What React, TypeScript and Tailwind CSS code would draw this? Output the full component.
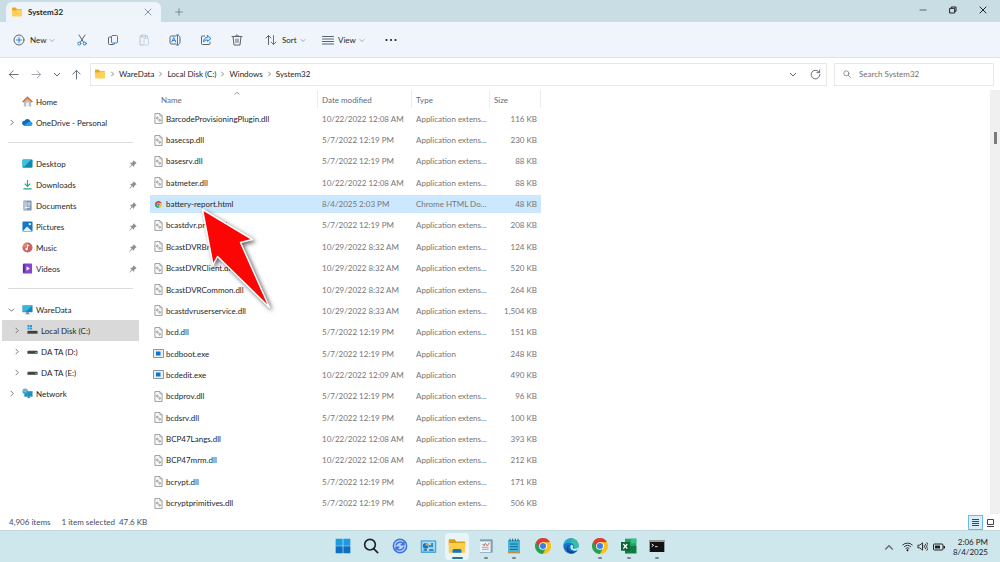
import type { ReactNode } from "react";

type FileKind = "dll" | "exe" | "html";
type FileRow = [name: string, date: string, size: string, kind: FileKind];

const FILES: FileRow[] = [
  ["BarcodeProvisioningPlugin.dll", "10/22/2022 12:08 AM", "116 KB", "dll"],
  ["basecsp.dll", "5/7/2022 12:19 PM", "230 KB", "dll"],
  ["basesrv.dll", "5/7/2022 12:19 PM", "88 KB", "dll"],
  ["batmeter.dll", "10/22/2022 12:08 AM", "88 KB", "dll"],
  ["battery-report.html", "8/4/2025 2:03 PM", "48 KB", "html"],
  ["bcastdvr.proxy.dll", "5/7/2022 12:19 PM", "208 KB", "dll"],
  ["BcastDVRBroker.dll", "10/29/2022 8:32 AM", "124 KB", "dll"],
  ["BcastDVRClient.dll", "10/29/2022 8:32 AM", "520 KB", "dll"],
  ["BcastDVRCommon.dll", "10/29/2022 8:32 AM", "264 KB", "dll"],
  ["bcastdvruserservice.dll", "10/29/2022 8:33 AM", "1,504 KB", "dll"],
  ["bcd.dll", "5/7/2022 12:19 PM", "151 KB", "dll"],
  ["bcdboot.exe", "5/7/2022 12:19 PM", "248 KB", "exe"],
  ["bcdedit.exe", "10/22/2022 12:09 AM", "490 KB", "exe"],
  ["bcdprov.dll", "5/7/2022 12:19 PM", "96 KB", "dll"],
  ["bcdsrv.dll", "5/7/2022 12:19 PM", "100 KB", "dll"],
  ["BCP47Langs.dll", "10/22/2022 12:08 AM", "393 KB", "dll"],
  ["BCP47mrm.dll", "10/22/2022 12:08 AM", "212 KB", "dll"],
  ["bcrypt.dll", "5/7/2022 12:19 PM", "171 KB", "dll"],
  ["bcryptprimitives.dll", "5/7/2022 12:19 PM", "506 KB", "dll"],
];

const TYPES: Record<FileKind, string> = {
  dll: "Application extens...",
  exe: "Application",
  html: "Chrome HTML Do...",
};

function Chevron({ dir, className = "size-2" }: { dir: "right" | "down" | "up"; className?: string }) {
  const d = { right: "M3 1l3 3-3 3", down: "M1 3l3 3 3-3", up: "M1 6l3-3 3 3" }[dir];
  return (
    <svg
      viewBox="0 0 8 8"
      className={`shrink-0 text-[#666] ${className}`}
      fill="none"
      stroke="currentColor"
      aria-hidden
    >
      <path d={d} />
    </svg>
  );
}

function Line({ children, className = "size-3" }: { children: ReactNode; className?: string }) {
  return (
    <svg
      viewBox="0 0 24 24"
      className={`shrink-0 ${className}`}
      fill="none"
      stroke="#5a6470"
      strokeWidth="2"
      strokeLinecap="round"
      strokeLinejoin="round"
      aria-hidden
    >
      {children}
    </svg>
  );
}

function Folder({ className = "size-3" }: { className?: string }) {
  return (
    <svg viewBox="0 0 24 24" className={`shrink-0 ${className}`} aria-hidden>
      <path d="M2 5a2 2 0 0 1 2-2h5l3 3h8a2 2 0 0 1 2 2v4H2z" fill="#e8a723" />
      <path d="M2 9h8l2-2h10v12a2 2 0 0 1-2 2H4a2 2 0 0 1-2-2z" fill="#ffd05a" />
    </svg>
  );
}

function Chrome({ className }: { className: string }) {
  return (
    <svg viewBox="0 0 24 24" className={className} aria-hidden>
      <path d="M12 12L1.600 6A12 12 0 0 1 22.400 6z" fill="#e23b2e" />
      <path d="M12 12L22.400 6A12 12 0 0 1 12 24z" fill="#fbc116" />
      <path d="M12 12V24A12 12 0 0 1 1.600 6z" fill="#2b9f4b" />
      <path d="M12 6.500h10.700L17 15z" fill="#fbc116" />
      <path d="M1.600 6L7 14.500 12 6.500z" fill="#e23b2e" />
      <path d="M7 14.500L12 24l5-9z" fill="#2b9f4b" />
      <path d="M17 14.500L12 24l5-3z" fill="#fbc116" />
      <circle cx="12" cy="12" r="5.800" fill="#fff" />
      <circle cx="12" cy="12" r="4.600" fill="#3a7fea" />
    </svg>
  );
}

function FileIcon({ kind }: { kind: FileKind }) {
  if (kind === "html") return <Chrome className="size-[7px]" />;
  if (kind === "exe")
    return (
      <svg viewBox="0 0 22 18" className="h-[9px] w-[11px]" aria-hidden>
        <path d="M1 1h20v16H1z" fill="#e8f0f5" stroke="#8a969e" strokeWidth="2" />
        <path d="M6 5h9v8H6z" fill="#0878cf" />
      </svg>
    );
  return (
    <svg viewBox="0 0 20 24" className="h-[11px] w-[9px]" fill="none" stroke="#8b8b8b" aria-hidden>
      <path d="M2 1h11l5 5v17H2z" fill="#fafafa" strokeWidth="1.800" />
      <path d="M13 1v5h5" strokeWidth="1.500" />
      <circle cx="7.500" cy="11" r="2" strokeWidth="2" />
      <circle cx="12.500" cy="16" r="2" strokeWidth="2" />
    </svg>
  );
}

const Monitor = (
  <svg viewBox="0 0 24 24" className="size-[11px]" aria-hidden>
    <path d="M1 3h22v15H1z" fill="#1688be" />
    <path d="M2 4h20L8 17H2z" fill="#35b5e0" />
    <path d="M9 18h6v3H9zM6 21h12v1.500H6z" fill="#6b8796" />
  </svg>
);

const Drive = (
  <svg viewBox="0 0 24 24" className="size-[11px]" aria-hidden>
    <path d="M3 9h18l2 3H1z" fill="#b5b5b5" />
    <path d="M1 11h22v6H1z" fill="#404040" />
    <path d="M18 13h3v2h-3z" fill="#7fd39a" />
  </svg>
);

type Place = { label: string; icon: ReactNode; arrow?: "right" | "down"; nested?: boolean; active?: boolean };

const TOP: Place[] = [
  {
    label: "Home",
    icon: (
      <svg viewBox="0 0 24 24" className="size-[11px]" aria-hidden>
        <path d="M4 11l8-8 8 8v12h-5v-8H9v8H4z" fill="#b9bdc4" />
        <path d="M9 14h6v9H9z" fill="#f3ede8" />
        <path d="M1.500 13L12 3l10.500 10" fill="none" stroke="#d9702e" strokeWidth="3.500" strokeLinejoin="round" />
      </svg>
    ),
  },
  {
    label: "OneDrive - Personal",
    arrow: "right",
    icon: (
      <svg viewBox="0 0 24 24" className="size-[11px]" aria-hidden>
        <path d="M6 19a5.500 5.500 0 0 1-.500-11 7 7 0 0 1 13 2.500A4.500 4.500 0 0 1 19 19z" fill="#0f6cbd" />
        <path d="M4 18.500L15 11a5 5 0 0 1 8 3.500 4.500 4.500 0 0 1-4 4.500H6z" fill="#28a0ea" />
      </svg>
    ),
  },
];

const PINNED: Place[] = [
  {
    label: "Desktop",
    icon: (
      <svg viewBox="0 0 24 24" className="size-[11px]" aria-hidden>
        <rect x="1" y="3" width="22" height="18" rx="2" fill="#1188b2" />
        <path d="M3 3h17L5 19H1V5z" fill="#3cc2dc" />
      </svg>
    ),
  },
  {
    label: "Downloads",
    icon: (
      <svg viewBox="0 0 24 24" className="size-[11px]" fill="none" stroke="#27a67c" strokeWidth="2.500" aria-hidden>
        <path d="M12 2v14M6 10l6 6 6-6M3 21.500h18" />
      </svg>
    ),
  },
  {
    label: "Documents",
    icon: (
      <svg viewBox="0 0 24 24" className="size-[11px]" aria-hidden>
        <rect x="3" y="1" width="18" height="22" rx="2" fill="#8198b2" />
        <path d="M3 3h8v18H3z" fill="#b5c6d7" />
        <path d="M12 7h6M12 11h6M7 16h10" stroke="#fff" strokeWidth="2" />
      </svg>
    ),
  },
  {
    label: "Pictures",
    icon: (
      <svg viewBox="0 0 24 24" className="size-[11px]" aria-hidden>
        <rect x="1" y="1" width="22" height="22" rx="2" fill="#1478c8" />
        <path d="M2 22l9-10 10 10z" fill="#e6f6ff" />
        <circle cx="17" cy="7" r="2.500" fill="#fff" />
      </svg>
    ),
  },
  {
    label: "Music",
    icon: (
      <svg viewBox="0 0 24 24" className="size-[11px]" aria-hidden>
        <circle cx="12" cy="12" r="11" fill="#ca6068" />
        <path d="M1 12A11 11 0 0 1 12 1l-2 11z" fill="#e08a63" />
        <path d="M12 15V6l4 2" fill="none" stroke="#fff" strokeWidth="2" />
        <circle cx="10" cy="15.500" r="2.800" fill="#fff" />
      </svg>
    ),
  },
  {
    label: "Videos",
    icon: (
      <svg viewBox="0 0 24 24" className="size-[11px]" aria-hidden>
        <rect x="2" y="1" width="20" height="22" rx="2" fill="#8a45cc" />
        <path d="M2 3h4v18H2z" fill="#5c2a9c" />
        <path d="M10 7l7 5-7 5z" fill="#fff" />
      </svg>
    ),
  },
];

const DEVICES: Place[] = [
  { label: "WareData", icon: Monitor, arrow: "down" },
  {
    label: "Local Disk (C:)",
    arrow: "right",
    nested: true,
    active: true,
    icon: (
      <svg viewBox="0 0 24 24" className="size-[11px]" aria-hidden>
        <path d="M1 0h4v5H1zM6 0h5v5H6zM1 6h4v4H1zM6 6h5v4H6z" fill="#2c9ad6" />
        <path d="M3 12h18l2 2H1z" fill="#a8a8a8" />
        <path d="M1 13h22v6H1z" fill="#404040" />
      </svg>
    ),
  },
  { label: "DA TA (D:)", icon: Drive, arrow: "right", nested: true },
  { label: "DA TA (E:)", icon: Drive, arrow: "right", nested: true },
  {
    label: "Network",
    arrow: "right",
    icon: (
      <svg viewBox="0 0 24 24" className="size-[11px]" aria-hidden>
        <path d="M5 7h18v12H5z" fill="#1b93c4" />
        <path d="M12 19h5v3h-5z" fill="#55707e" />
        <circle cx="7" cy="7" r="6" fill="#3f9fc6" />
        <path d="M2 6c3-1 4 3 7 2M6 1c-1 3 4 4 6 4" stroke="#d6f2fb" strokeWidth="1.500" fill="none" />
      </svg>
    ),
  },
];

function Places({ items, pinned = false }: { items: Place[]; pinned?: boolean }) {
  return (
    <ul>
      {items.map((p) => (
        <li key={p.label}>
          <a
            href="#"
            className={`flex h-[21px] items-center pr-[2px] ${p.nested ? "pl-[11px]" : "pl-[6px]"} ${
              p.active ? "bg-[#d9d9d9]" : ""
            }`}
          >
            <span className="w-[14px]">
              {p.arrow && (
                <Chevron dir={p.arrow} className={p.arrow === "down" ? "size-[7px] text-[#222]" : "size-[7px]"} />
              )}
            </span>
            {p.icon}
            <span className="ml-[3px] flex-1">{p.label}</span>
            {pinned && (
              <svg viewBox="0 0 24 24" className="size-2" fill="#8a9197" aria-hidden>
                <path d="M14 1l9 9-3 1-4 4-1 6-5-5-8 7-1-1 7-8-5-5 6-1 4-4z" />
              </svg>
            )}
          </a>
        </li>
      ))}
    </ul>
  );
}

const COMMANDS: { label: string; icon: ReactNode; disabled?: boolean }[] = [
  {
    label: "Cut",
    icon: (
      <Line>
        <path d="M6 2l9 14M18 2L9 16" />
        <circle cx="6.500" cy="19" r="3" stroke="#2a84d8" />
        <circle cx="17.500" cy="19" r="3" stroke="#2a84d8" />
      </Line>
    ),
  },
  {
    label: "Copy",
    icon: (
      <Line>
        <path d="M8 6H5a2 2 0 0 0-2 2v11a2 2 0 0 0 2 2h8a2 2 0 0 0 2-2" />
        <rect x="9" y="3" width="12" height="15" rx="2" stroke="#2a84d8" />
      </Line>
    ),
  },
  {
    label: "Paste",
    disabled: true,
    icon: (
      <Line>
        <path d="M8 4H4v18h7M15 4h4v4M8 2h7v4H8z" />
        <rect x="12" y="9" width="9" height="13" rx="1" stroke="#7d9db8" />
      </Line>
    ),
  },
  {
    label: "Rename",
    icon: (
      <Line>
        <path d="M14 4H5a3 3 0 0 0-3 3v10a3 3 0 0 0 3 3h9M20 4a3 3 0 0 1 2 3v10a3 3 0 0 1-2 3" />
        <path d="M17 2v20M15 2h4M15 22h4M5.500 16L9.500 7l4 9M7 13h5" stroke="#2a84d8" />
      </Line>
    ),
  },
  {
    label: "Share",
    icon: (
      <Line>
        <path d="M9 4H5a2 2 0 0 0-2 2v13a2 2 0 0 0 2 2h13a2 2 0 0 0 2-2v-3" />
        <path d="M15 3l7 6-7 6v-3c-4 0-6 1-8 4 0-6 3-9 8-10z" fill="#cfe6fa" stroke="#2a84d8" />
      </Line>
    ),
  },
  {
    label: "Delete",
    icon: (
      <Line>
        <path d="M2 5h20M8 5c0-4 8-4 8 0M4 5l2 17h12l2-17M10 10v7M14 10v7" />
      </Line>
    ),
  },
];

const APPS: { label: string; icon: ReactNode; state?: "open" | "active" }[] = [
  {
    label: "Start",
    icon: (
      <svg viewBox="0 0 24 24" className="size-4" aria-hidden>
        <path d="M1 1h10.500v10.500H1zM12.500 1H23v10.500H12.500z" fill="#1e9be0" />
        <path d="M1 12.500h10.500V23H1zM12.500 12.500H23V23H12.500z" fill="#0b6fc2" />
      </svg>
    ),
  },
  {
    label: "Search",
    icon: (
      <svg viewBox="0 0 24 24" className="size-4" fill="none" stroke="#202428" strokeWidth="2.500" aria-hidden>
        <circle cx="10.500" cy="10" r="8" />
        <path d="M16 16l6 6" strokeLinecap="round" />
      </svg>
    ),
  },
  {
    label: "Sync",
    icon: (
      <svg viewBox="0 0 24 24" className="size-4" fill="none" stroke="#3d73e0" strokeWidth="2.200" aria-hidden>
        <circle cx="12" cy="12" r="10" fill="#bdd3fa" />
        <path d="M6 11c1-5 8-7 11-2M18 5v5h-5M18 13c-1 5-8 7-11 2M6 19v-5h5" />
      </svg>
    ),
  },
  {
    label: "Control Panel",
    icon: (
      <svg viewBox="0 0 24 24" className="size-[17px]" aria-hidden>
        <rect x="1" y="3" width="22" height="18" rx="1" fill="#4aa9de" />
        <path d="M3 5h18v14H3z" fill="#a5dcf6" />
        <circle cx="8" cy="11" r="4" fill="#1976b8" />
        <path d="M8 11V7a4 4 0 0 1 4 4z" fill="#f19b38" />
        <path d="M14 13v-3M17 13V7M5 17h5M13 17h6" stroke="#1668a5" strokeWidth="2" />
      </svg>
    ),
  },
  {
    label: "File Explorer",
    state: "active",
    icon: (
      <svg viewBox="0 0 24 24" className="size-[18px]" aria-hidden>
        <path d="M1 4a1 1 0 0 1 1-1h7l2 3h11a1 1 0 0 1 1 1v4H1z" fill="#dc9a16" />
        <path d="M1 8h22v13H1z" fill="#ffcd48" />
        <path d="M6 21v-3a2 2 0 0 1 2-2h8a2 2 0 0 1 2 2v3z" fill="#1677bd" />
      </svg>
    ),
  },
  {
    label: "Journal",
    state: "open",
    icon: (
      <svg viewBox="0 0 24 24" className="size-4" aria-hidden>
        <path d="M3 2h19v20H3z" fill="#7f9bb5" />
        <path d="M3 5h16v16H3z" fill="#edf2f6" />
        <path d="M6 10h4M6 14h10M6 17h10" stroke="#8faac2" strokeWidth="1.500" />
        <path d="M9 12l2-4 3 4 3-5" stroke="#d9674f" fill="none" strokeWidth="1.500" />
      </svg>
    ),
  },
  {
    label: "Notepad",
    state: "open",
    icon: (
      <svg viewBox="0 0 24 24" className="size-4" aria-hidden>
        <path d="M3 3h18v18H3z" fill="#45b5dc" />
        <path d="M3 21h18v2H3z" fill="#c58b47" />
        <path d="M6 1v4M10 1v4M14 1v4M18 1v4" stroke="#25566f" strokeWidth="1.500" />
        <path d="M6 9h12M6 13h12M6 17h12" stroke="#136e9b" strokeWidth="1.500" />
      </svg>
    ),
  },
  { label: "Chrome", icon: <Chrome className="size-4" /> },
  {
    label: "Edge",
    icon: (
      <svg viewBox="0 0 24 24" className="size-4" aria-hidden>
        <circle cx="12" cy="12" r="11.500" fill="#1473ca" />
        <path d="M1 10C3-2 22-3 23.500 11c0 5-4 6-8 5 3-5-1-9-6-9-4 0-7 1-8.500 3z" fill="#35bfa5" />
        <path d="M1 10C2 4 7 1 11 1c4 1 3 4-2 6-4 0-6 1-8 3z" fill="#25a5d8" />
        <path d="M9 11c-4 6 3 12 12 8-3 4-8 5-11 4-6-2-6-10-1-12z" fill="#114a94" />
        <path d="M13 10c4 2 2 4 1 5 2 2 6 2 9-1 0 4-3 5-5 5-6 0-9-6-5-9z" fill="#d7eff3" />
      </svg>
    ),
  },
  { label: "Chrome profile", state: "open", icon: <Chrome className="size-4" /> },
  {
    label: "Excel",
    state: "open",
    icon: (
      <svg viewBox="0 0 24 24" className="size-4" aria-hidden>
        <path d="M6 1h17v22H6z" fill="#21a366" />
        <path d="M15 1h8v7h-8z" fill="#33c481" />
        <path d="M6 12h17v11H6z" fill="#107c41" />
        <path d="M0 6h13v13H0z" fill="#0b6332" />
        <path d="M3.500 9l6 7M9.500 9l-6 7" stroke="#fff" strokeWidth="2" />
      </svg>
    ),
  },
  {
    label: "Command Prompt",
    state: "open",
    icon: (
      <svg viewBox="0 0 24 24" className="size-4" aria-hidden>
        <path d="M1 3h22v18H1z" fill="#111" />
        <path d="M1 3h22v3H1z" fill="#969a9c" />
        <path d="M4 9l3 2-3 2M9 13h4" stroke="#ddd" fill="none" strokeWidth="1.500" />
      </svg>
    ),
  },
];

const CRUMBS = ["WareData", "Local Disk (C:)", "Windows", "System32"];

export default function App() {
  return (
    <div className="flex h-screen flex-col overflow-hidden bg-white font-[Lato,'Noto_Sans',sans-serif] text-[8px] leading-[12px] text-[#262626]">
      <header className="flex h-[22px] shrink-0 items-end bg-[#c9dee4] pl-[6px]">
        <div className="flex h-5 w-[155px] items-center rounded-t-md bg-[#edf5fa] pr-[9px] pl-[5px]">
          <Folder />
          <span className="ml-[5px] flex-1 font-bold">System32</span>
          <button type="button" aria-label="Close tab">
            <Line className="size-2">
              <path d="M3 3l18 18M21 3L3 21" />
            </Line>
          </button>
        </div>
        <button type="button" aria-label="New tab" className="flex h-5 w-[35px] items-center justify-center">
          <Line className="size-2">
            <path d="M12 2v20M2 12h20" />
          </Line>
        </button>
        <div className="ml-auto flex h-full items-center pr-[2px] pb-[2px]">
          <button type="button" aria-label="Minimize" className="flex w-[30px] justify-center">
            <Line className="size-2">
              <path d="M3 12h18" stroke="#222" />
            </Line>
          </button>
          <button type="button" aria-label="Restore" className="flex w-[30px] justify-center">
            <Line className="size-2">
              <path d="M7 6V3h14v13h-3M3 7h14v14H3z" stroke="#222" strokeWidth="3" />
            </Line>
          </button>
          <button type="button" aria-label="Close" className="flex w-[30px] justify-center">
            <Line className="size-2">
              <path d="M3 3l18 18M21 3L3 21" stroke="#222" strokeWidth="3" />
            </Line>
          </button>
        </div>
      </header>

      <div className="flex h-9 shrink-0 items-center border-b border-[#dde3e6] bg-[#eff5fa] pt-px">
        <button type="button" className="flex w-[66px] items-center pl-[13px]">
          <Line>
            <circle cx="12" cy="12" r="10" />
            <path d="M12 7v10M7 12h10" stroke="#2a84d8" />
          </Line>
          <span className="ml-[5px]">New</span>
          <Chevron dir="down" className="ml-[3px] size-[6px] opacity-70" />
        </button>
        {COMMANDS.map((c) => (
          <button
            key={c.label}
            type="button"
            aria-label={c.label}
            disabled={c.disabled}
            className="flex w-[31px] justify-center disabled:opacity-35"
          >
            {c.icon}
          </button>
        ))}
        <button type="button" className="flex w-[56px] items-center pl-[13px]">
          <Line>
            <path d="M7 21V3M2 8l5-5 5 5" />
            <path d="M17 3v18M12 16l5 5 5-5" stroke="#2a84d8" />
          </Line>
          <span className="ml-[5px]">Sort</span>
          <Chevron dir="down" className="ml-[3px] size-[6px] opacity-70" />
        </button>
        <button type="button" className="flex w-[68px] items-center pl-[14px]">
          <Line>
            <path d="M1 5h22M1 10h22M1 15h22M1 20h22" />
          </Line>
          <span className="ml-1">View</span>
          <Chevron dir="down" className="ml-[3px] size-[6px] opacity-70" />
        </button>
        <button type="button" aria-label="See more" className="flex w-[30px] justify-center">
          <svg viewBox="0 0 24 24" className="size-3" fill="#222" aria-hidden>
            <circle cx="3" cy="12" r="2.200" />
            <circle cx="12" cy="12" r="2.200" />
            <circle cx="21" cy="12" r="2.200" />
          </svg>
        </button>
      </div>

      <div className="flex h-8 shrink-0 items-center pr-[6px] pl-1">
        <div className="flex w-[86px] items-center justify-between pr-2 pl-1">
          <button type="button" aria-label="Back">
            <Line className="size-[11px]">
              <path d="M22 12H3M11 4l-8 8 8 8" />
            </Line>
          </button>
          <button type="button" aria-label="Forward" className="ml-[2px] opacity-60">
            <Line className="size-[11px]">
              <path d="M2 12h19M13 4l8 8-8 8" />
            </Line>
          </button>
          <button type="button" aria-label="Recent locations">
            <Chevron dir="down" />
          </button>
          <button type="button" aria-label="Up">
            <Line className="size-[11px]">
              <path d="M12 22V3M4 11l8-8 8 8" />
            </Line>
          </button>
        </div>
        <nav
          aria-label="Address"
          className="flex h-[23px] flex-1 items-center border border-[#e8e8e8] bg-white pr-[5px] pl-[3px]"
        >
          <Folder />
          {CRUMBS.map((c) => (
            <span key={c} className="flex items-center">
              <Chevron dir="right" className="mr-1 ml-[3px] size-[6px]" />
              <a href="#">{c}</a>
            </span>
          ))}
          <button type="button" aria-label="Previous locations" className="mr-[13px] ml-auto">
            <Chevron dir="down" />
          </button>
          <button type="button" aria-label="Refresh">
            <Line className="size-[11px]">
              <path d="M20 7a9.500 9.500 0 1 0 1.500 5M21 2v6h-6" />
            </Line>
          </button>
        </nav>
        <label className="ml-[7px] flex h-[23px] w-[160px] items-center border border-[#e8e8e8] pl-2">
          <Line className="size-2">
            <circle cx="10" cy="10" r="7.500" />
            <path d="M16 16l6 6" />
          </Line>
          <input
            type="text"
            aria-label="Search System32"
            placeholder="Search System32"
            className="ml-2 w-full outline-none placeholder:text-[#707070]"
          />
        </label>
      </div>

      <main className="relative flex min-h-0 flex-1">
        <aside className="w-[139px] shrink-0 pt-px pl-[2px]">
          <Places items={TOP} />
          <hr className="mx-[6px] mt-[9px] mb-[10px] border-t border-[#dcdcdc]" />
          <Places items={PINNED} pinned />
          <hr className="mx-[6px] mt-[9px] mb-[10px] border-t border-[#dcdcdc]" />
          <Places items={DEVICES} />
        </aside>

        <div className="ml-[11px] h-full">
          <table className="h-full w-[391px] table-fixed border-separate border-spacing-0 text-left whitespace-nowrap">
            <colgroup>
              <col className="w-[168px]" />
              <col className="w-[94px]" />
              <col className="w-[78px]" />
              <col />
            </colgroup>
            <thead className="text-[#5c6b80]">
              <tr className="h-[18px]">
                <th className="relative border-r border-[#ececec] p-0 pt-px pl-[11px] font-normal">
                  Name
                  <Chevron dir="up" className="absolute top-0 left-[84px] size-[6px]" />
                </th>
                <th className="border-r border-[#ececec] p-0 pt-px pl-1 font-normal">Date modified</th>
                <th className="border-r border-[#ececec] p-0 pt-px pl-1 font-normal">Type</th>
                <th className="border-r border-[#ececec] p-0 pt-px pl-1 font-normal">Size</th>
              </tr>
            </thead>
            <tbody className="text-[#757575]">
              {FILES.map(([name, date, size, kind]) => (
                <tr
                  key={name}
                  className={
                    kind === "html"
                      ? "*:border-y-2 *:border-transparent *:bg-[#cce8ff] *:bg-clip-padding"
                      : "*:border-y-2 *:border-transparent"
                  }
                >
                  <td className="p-0 pl-[2px] text-[#262626]">
                    <div className="flex items-center">
                      <span className="mr-px flex w-[13px] justify-center">
                        <FileIcon kind={kind} />
                      </span>
                      {name}
                    </div>
                  </td>
                  <td className="p-0 pl-1">{date}</td>
                  <td className="p-0 pl-1">{TYPES[kind]}</td>
                  <td className="p-0 pr-1 text-right">{size}</td>
                </tr>
              ))}
            </tbody>
          </table>
        </div>

        <div className="ml-auto w-[10px] bg-[#f0f0f0] pt-[42px]">
          <div className="mx-auto h-3 w-[3px] bg-[#7c7c7c]" />
        </div>

        {/* callout arrow over the selected file */}
        <svg
          viewBox="0 0 80 110"
          className="pointer-events-none absolute top-[115px] left-[197px] h-[110px] w-[80px] drop-shadow-[2px_2px_2px_rgba(0,0,0,0.6)]"
          aria-hidden
        >
          <path
            d="M5.500 4.500L55.500 34.500 43.500 37.500 72.500 102.500 20.500 51.500 16 60z"
            fill="#fb0505"
            stroke="#fff"
            strokeWidth="1.500"
            strokeLinejoin="round"
          />
        </svg>
      </main>

      <div className="flex h-4 shrink-0 items-center pr-[5px] pl-[9px] text-[#3f4c68]">
        <span>4,906 items</span>
        <span className="ml-[11px]">1 item selected</span>
        <span className="ml-1">47.6 KB</span>
        <button
          type="button"
          aria-label="Details view"
          className="ml-auto flex h-[15px] w-[15px] items-center justify-center border border-[#6cbbe4] bg-[#d8eefa]"
        >
          <svg viewBox="0 0 9 7" className="h-[7px] w-[9px]" stroke="#444" aria-hidden>
            <path d="M1 .5h7M1 2.500h7M1 4.500h7M1 6.500h7" />
          </svg>
        </button>
        <button type="button" aria-label="Large thumbnails" className="ml-[3px]">
          <svg viewBox="0 0 9 9" className="size-[9px]" fill="none" stroke="#444" aria-hidden>
            <path d="M1.500 1.500h6v5h-6zM1 8.500h7" />
          </svg>
        </button>
      </div>

      <footer className="grid h-8 shrink-0 grid-cols-[1fr_343px_1fr] items-center border-t border-[#c3d9df] bg-[#cee7ed]">
        <div className="col-start-2 grid h-full grid-cols-12">
          {APPS.map((a) => (
            <button
              key={a.label}
              type="button"
              aria-label={a.label}
              className={`relative flex items-center justify-center pb-px ${
                a.state === "active" ? "mx-[2px] my-[2px] rounded bg-[#eaf5f7]" : ""
              }`}
            >
              {a.icon}
              {a.state === "open" && (
                <span className="absolute bottom-[3px] h-[2px] w-1 rounded-full bg-[#7b878c]" />
              )}
              {a.state === "active" && (
                <span className="absolute bottom-px h-[2px] w-[11px] rounded-full bg-[#28788b]" />
              )}
            </button>
          ))}
        </div>
        <div className="flex items-center justify-end pr-3 text-[#222]">
          <Chevron dir="up" className="mr-2 size-[10px]" />
          <svg viewBox="0 0 24 24" className="mr-1 size-[11px]" fill="none" stroke="#222" strokeWidth="2" aria-hidden>
            <path d="M1 9a16 16 0 0 1 22 0M4.500 13a11 11 0 0 1 15 0M8 16.500a6 6 0 0 1 8 0" />
            <circle cx="12" cy="20" r="1.500" fill="#222" />
          </svg>
          <svg viewBox="0 0 24 24" className="mr-[5px] size-[11px]" fill="none" stroke="#222" strokeWidth="2" aria-hidden>
            <path d="M2 9h4l6-5v16l-6-5H2zM15 9a5 5 0 0 1 0 6M18 6a9 9 0 0 1 0 12M21 3a13 13 0 0 1 0 18" />
          </svg>
          <svg viewBox="0 0 24 16" className="mr-2 h-2 w-3" aria-hidden>
            <rect x="1" y="2" width="19" height="12" rx="2" fill="none" stroke="#222" strokeWidth="2" />
            <path d="M4 5h10v6H4zM21 6h3v5h-3z" fill="#222" />
          </svg>
          <div className="text-right leading-[10px]">
            <div>2:06 PM</div>
            <div>8/4/2025</div>
          </div>
        </div>
      </footer>
    </div>
  );
}
